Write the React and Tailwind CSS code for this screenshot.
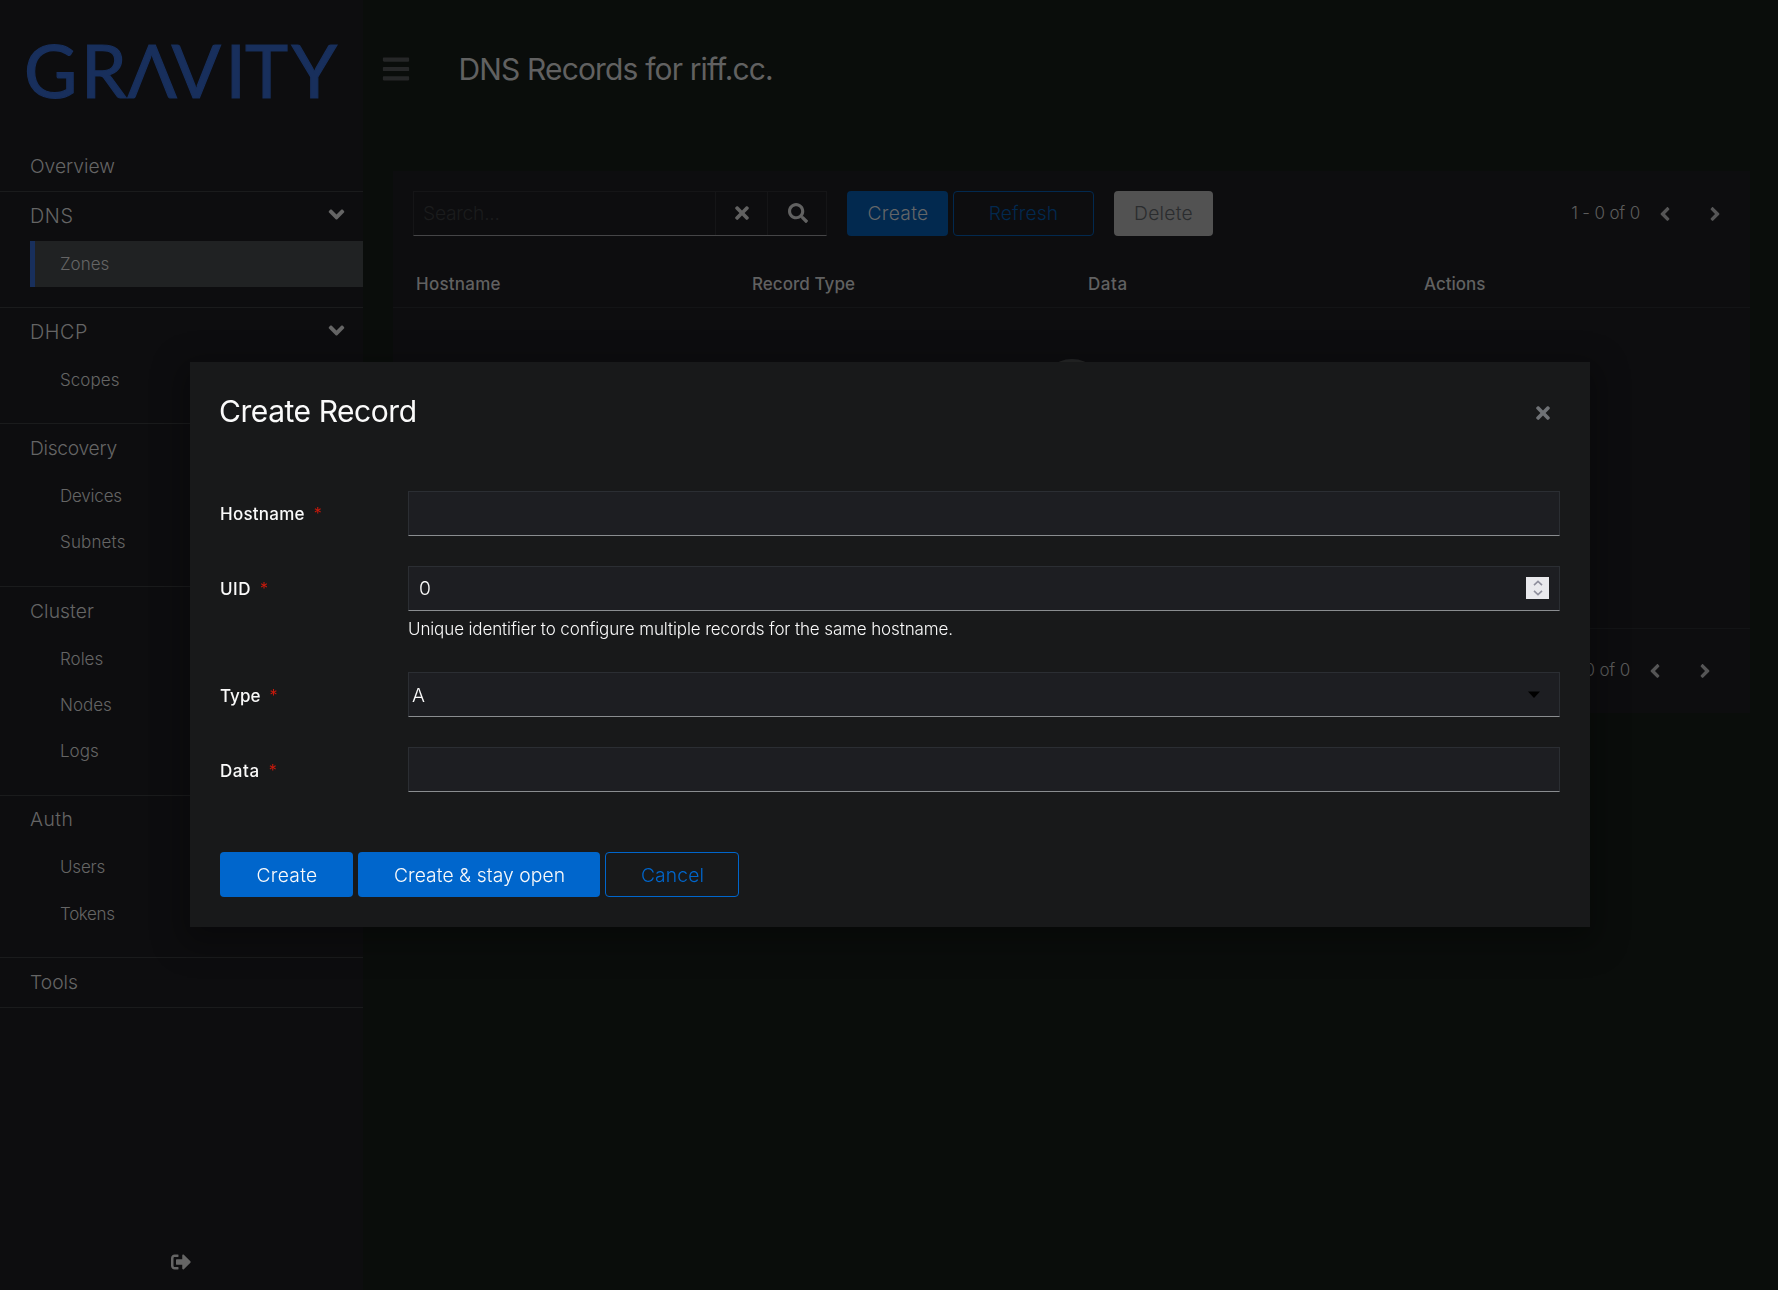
import React from "react";
import { FaAngleDown, FaAngleLeft, FaAngleRight, FaBars, FaSearch, FaSignOutAlt, FaTimes } from "react-icons/fa";

const sections = [
  {
    title: "DNS",
    titleClass: "tracking-[0.6px] text-[19.8px] pt-[2px]",
    expandable: true,
    items: [{ label: "Zones", active: true, className: "" }],
  },
  {
    title: "DHCP",
    titleClass: "tracking-[0.6px] text-[19.8px] pt-[2px]",
    expandable: true,
    items: [{ label: "Scopes", className: "tracking-[0.05px]" }],
  },
  {
    title: "Discovery",
    titleClass: "tracking-[-0.3px]",
    items: [
      { label: "Devices", className: "tracking-[-0.2px]" },
      { label: "Subnets", className: "tracking-[0.15px] pb-px" },
    ],
  },
  {
    title: "Cluster",
    titleClass: "tracking-[0.08px] pt-[2px]",
    items: [
      { label: "Roles", className: "" },
      { label: "Nodes", className: "" },
      { label: "Logs", className: "pb-px" },
    ],
  },
  {
    title: "Auth",
    titleClass: "tracking-[0.5px]",
    items: [
      { label: "Users", className: "tracking-[-0.19px] pb-px" },
      { label: "Tokens", className: "tracking-[-0.35px]" },
    ],
  },
];

const columns = [
  { label: "Hostname", className: "tracking-[0.24px]" },
  { label: "Record Type", className: "tracking-[0.05px]" },
  { label: "Data", className: "tracking-[0.6px]" },
  { label: "Actions", className: "" },
];

function Logo() {
  return (
    <svg
      width="363"
      height="141"
      viewBox="0 0 363 141"
      className="block shrink-0 fill-[#182f5c] stroke-[#182f5c] font-['Lato',sans-serif] text-[73px] font-normal"
      strokeWidth="1.2"
    >
      <text x="24 81 127.5 171.5 225.5 245 291.5" y="98.3">GRΛVITY</text>
    </svg>
  );
}

function Sidebar() {
  return (
    <nav className="flex w-[363px] shrink-0 flex-col bg-[#0d0d0f] text-[19.25px] font-light text-[#656565]">
      <Logo />
      <div className="flex h-[51px] items-center border-b border-[#1a1b1c] pl-[30px]">Overview</div>
      {sections.map((s) => (
        <section key={s.title} className="border-b border-[#1a1b1c] pb-5">
          <div className="flex h-[48.5px] items-center justify-between pr-[14px] pl-[30px]">
            <span className={s.titleClass}>{s.title}</span>
            {s.expandable && <FaAngleDown className="-mt-1 text-[25px]" />}
          </div>
          {s.items.map((i) => (
            <div
              key={i.label}
              className={
                i.active
                  ? "ml-[30px] flex h-[46.5px] items-center border-l-[5px] border-[#182f5c] bg-[#202223] pt-[2px] pl-[25px] text-[17px]"
                  : "ml-[30px] flex h-[46.5px] items-center pt-[2px] pl-[30px] text-[17px]"
              }
            >
              <span className={i.className}>{i.label}</span>
            </div>
          ))}
        </section>
      ))}
      <div className="flex h-[50px] items-center border-b border-[#1a1b1c] pl-[30px]">Tools</div>
      <div className="mt-auto mb-[18px] flex justify-center pr-[2px]">
        <FaSignOutAlt className="text-[20px]" />
      </div>
    </nav>
  );
}

function Pager() {
  return (
    <div className="flex items-center text-[17px] font-light text-[#5c5c5c]">
      <span className="tracking-[-0.16px]">1 - 0 of 0</span>
      <FaAngleLeft className="ml-[14px] text-[22px] text-[#555556]" />
      <FaAngleRight className="ml-7 text-[22px] text-[#555556]" />
    </div>
  );
}

function Main() {
  return (
    <main className="flex min-w-0 grow flex-col bg-[#0a0d0b]">
      <header className="flex h-[138px] items-center pl-[17.5px] text-[#616161]">
        <FaBars className="text-[30px] text-[#262728]" />
        <h1 className="ml-[48px] text-[30px] tracking-[-0.85px]">DNS Records for riff.cc.</h1>
      </header>
      <div className="mt-[33px] mr-7 ml-[30px] flex h-[542px] flex-col bg-[#0d0d0f]">
        <div className="mt-5 flex h-[45px] pr-6 pl-5 text-[19.25px] font-light">
          <div className="flex w-[414px] items-stretch border border-[#151517] border-b-[#454547] text-[#616161]">
            <span className="flex w-[301px] items-center pl-[9px] tracking-[-0.27px] text-[#1b1c1d]">Search...</span>
            <span className="flex w-[52px] items-center justify-center border-l border-[#151517] pb-px">
              <FaTimes className="text-[20px]" />
            </span>
            <span className="flex grow items-center justify-center border-l border-[#151517] pb-px pl-px">
              <FaSearch className="text-[20px]" />
            </span>
          </div>
          <button className="ml-5 w-[101px] rounded-[4px] bg-[#02294f] pl-px tracking-[0.28px] text-[#646668]">
            Create
          </button>
          <button className="ml-[5px] w-[141px] rounded-[4px] border border-[#02294f] tracking-[0.09px] text-[#02294f]">
            Refresh
          </button>
          <button className="ml-5 w-[99px] rounded-[4px] bg-[#525252] tracking-[0.25px] text-[#2a2c2e]">Delete</button>
          <div className="ml-auto flex items-center">
            <Pager />
          </div>
        </div>
        <div className="mt-[26px] grid h-[46px] grid-cols-[336px_336px_336px_1fr] items-center border-b border-[#131416] pl-[23px] text-[17px] font-medium text-[#616161]">
          {columns.map((c) => (
            <span key={c.label} className={c.className}>
              {c.label}
            </span>
          ))}
        </div>
        <div className="flex h-[321px] justify-center border-b border-[#131416] pt-[51px]">
          <div className="h-16 w-16 rounded-full bg-[#252627]" />
        </div>
        <div className="flex grow items-center justify-end pr-[34px]">
          <Pager />
        </div>
      </div>
    </main>
  );
}

const control = "flex h-[45px] items-center border border-[#2b2e33] border-b-[#8a8d90] bg-[#1d1e22] text-[19.25px] font-light";

function Field({ label, labelClass, lowered, children, help }) {
  return (
    <div className="grid grid-cols-[188px_1152px]">
      <label className={lowered ? "flex h-12 items-center pt-[2px] text-[17px] font-medium" : "flex h-12 items-center text-[17px] font-medium"}>
        <span className={labelClass}>{label}</span>
        <span className="-mt-1 ml-[9px] text-[16px] font-normal text-[#c9190b]">*</span>
      </label>
      <div>
        {children}
        {help && <p className="mt-[5px] h-[29px] text-[17px] leading-[26px] font-light tracking-[-0.12px]">{help}</p>}
      </div>
    </div>
  );
}

function Modal() {
  return (
    <div className="fixed inset-0 flex items-center justify-center pb-px pl-[2px]">
      <div
        role="dialog"
        className="flex h-[565px] w-[1400px] flex-col bg-[#18191a] px-[30px] text-[#fafafa] shadow-[0_10px_30px_8px_rgba(3,3,3,0.3)]"
      >
        <div className="flex h-[99px] items-center justify-between pr-[7px]">
          <h2 className="-ml-px text-[30px] tracking-[-0.45px]">Create Record</h2>
          <FaTimes className="mt-[2px] text-[20px] text-[#6f7276]" />
        </div>
        <form className="mt-[30px] flex flex-col gap-[27px]">
          <Field label="Hostname" labelClass="tracking-[0.24px]">
            <div className={control} />
          </Field>
          <Field
            label="UID"
            labelClass="tracking-[0.5px]"
            help="Unique identifier to configure multiple records for the same hostname."
          >
            <div className={control}>
              <span className="ml-[10px]">0</span>
              <span className="mr-[10px] mb-px ml-auto flex h-[22px] w-[23px] items-center justify-center bg-[#e9e9ed]">
                <svg width="10" height="16" viewBox="0 0 10 16" fill="none" stroke="#8f8f9d" strokeWidth="1.6">
                  <path d="M1 5.2 5 1.4 9 5.2M1 10.8 5 14.6 9 10.8" />
                </svg>
              </span>
            </div>
          </Field>
          <Field label="Type" labelClass="tracking-[0.06px]" lowered>
            <div className={control}>
              <span className="ml-[3px] pt-[2px]">A</span>
              <svg className="mr-[19px] ml-auto" width="12" height="7" viewBox="0 0 12 7">
                <path d="M0 .5h12L6 7z" fill="#000" />
              </svg>
            </div>
          </Field>
          <Field label="Data" labelClass="tracking-[0.6px]" lowered>
            <div className={control} />
          </Field>
        </form>
        <div className="mt-[57px] flex h-[45px] gap-[5px] text-[19.25px] font-light">
          <button className="w-[133px] rounded-[4px] bg-[#0066cc] pt-[2px] pl-px tracking-[0.28px]">Create</button>
          <button className="w-[242px] rounded-[4px] bg-[#0066cc] pt-[2px] pl-px tracking-[0.08px]">
            Create &amp; stay open
          </button>
          <button className="w-[134px] rounded-[4px] border border-[#0066cc] pt-[2px] pl-px tracking-[0.15px] text-[#0066cc]">
            Cancel
          </button>
        </div>
      </div>
    </div>
  );
}

export default function App() {
  return (
    <div className="flex h-screen overflow-hidden font-['Inter',sans-serif]">
      <Sidebar />
      <Main />
      <Modal />
    </div>
  );
}
